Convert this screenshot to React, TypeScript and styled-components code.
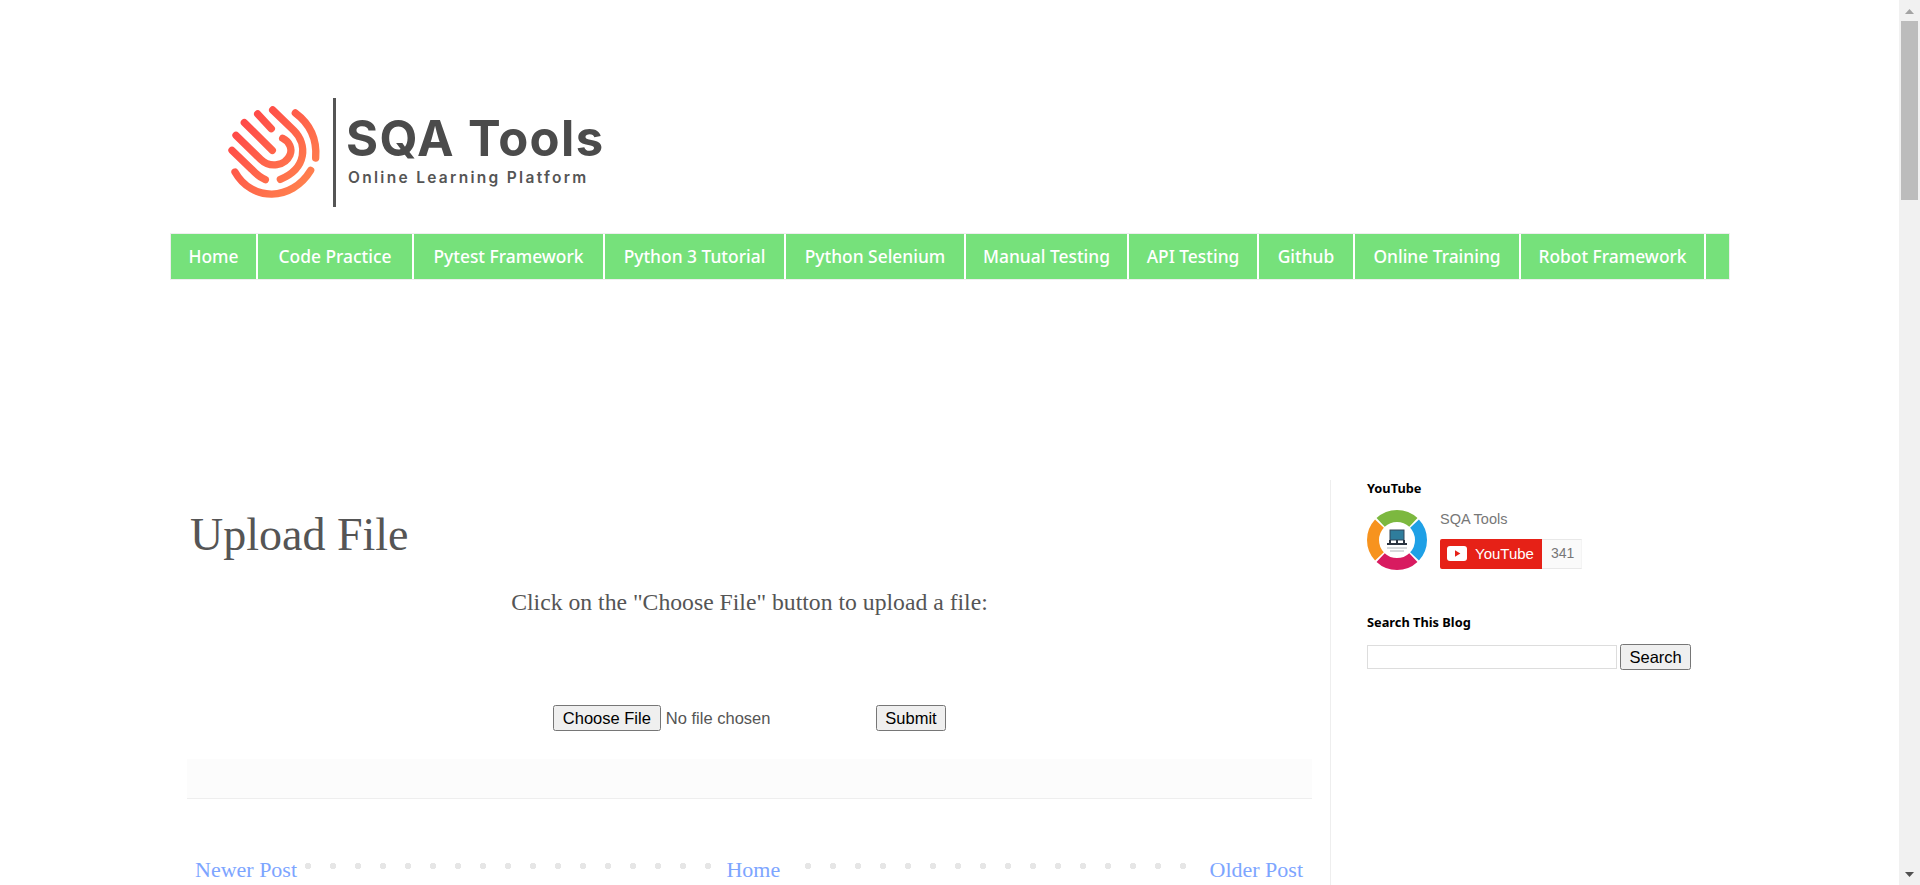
import React from 'react'
import styled, { createGlobalStyle } from 'styled-components'

const GlobalStyle = createGlobalStyle`
  html, body {
    margin: 0;
    padding: 0;
    background: #fff;
    overflow: hidden;
  }
`

const serif = `"Liberation Serif", "Times New Roman", serif`
const arial = `"Liberation Sans", Arial, sans-serif`
const trebuchet = `"Noto Sans", "Open Sans", sans-serif`

const Page = styled.div`
  display: flex;
  width: 1920px;
  height: 885px;
  overflow: hidden;
`

const Content = styled.div`
  flex: 1;
  padding-left: 171px;
  min-width: 0;
`

const Header = styled.header`
  display: flex;
  align-items: flex-start;
  height: 109px;
  padding-top: 98px;
  padding-left: 49px;
`

const LogoMark = styled.svg`
  width: 120px;
  height: 110px;
  flex: none;
  margin-top: 2px;
`

const LogoBar = styled.div`
  width: 3px;
  height: 109px;
  margin: 0 12px 0 -7px;
  background: #555;
`

const LogoText = styled.div`
  display: flex;
  flex-direction: column;
  padding-top: 14px;
  color: #4b4b4b;
  font-family: Inter, ${arial};
`

const LogoName = styled.div`
  font-size: 49px;
  font-weight: 700;
  line-height: 54px;
  letter-spacing: 1.4px;
  margin-left: -2px;
`

const LogoTag = styled.div`
  font-size: 15.5px;
  font-weight: 600;
  line-height: 20px;
  letter-spacing: 2.3px;
  margin-top: 2px;
  color: #555;
`

const Nav = styled.nav`
  display: flex;
  width: 1558px;
  height: 45px;
  margin-top: 27px;
  background: #76e17b;
  box-shadow: 0 0 0 1px #eee;
`

const Tab = styled.a<{ $w: number }>`
  width: ${(p) => p.$w}px;
  box-sizing: border-box;
  border-right: 2px solid #fff;
  color: #fff;
  font-family: ${trebuchet};
  font-size: 17.4px;
  font-weight: 500;
  line-height: 44px;
  text-align: center;
  text-decoration: none;
`

const Columns = styled.div`
  display: grid;
  grid-template-columns: 1159px 1fr;
  margin-top: 201px;
`

const Main = styled.main`
  padding: 0 18px 0 16px;
`

const Title = styled.h1`
  margin: 27px 0 0 3px;
  color: #555;
  font-family: ${serif};
  font-size: 46px;
  font-weight: 400;
  line-height: 56px;
`

const Lead = styled.p`
  margin: 25px 0 0;
  color: #555;
  font-family: ${serif};
  font-size: 23.7px;
  line-height: 28px;
  text-align: center;
`

const UploadForm = styled.form`
  display: flex;
  justify-content: center;
  margin-top: 89px;
  color: #555;
  font-family: ${arial};
  font-size: 16px;
`

const FileInput = styled.input`
  width: 323px;
  height: 26px;
  font-family: ${arial};
  font-size: 16.5px;
  color: #555;

  &::file-selector-button {
    height: 26px;
    padding: 0 8px;
    margin-right: 5px;
    color: #000;
    font-family: ${arial};
    font-size: 16.5px;
  }
`

const PlainButton = styled.button`
  height: 26px;
  padding: 0 7.5px;
  font-family: ${arial};
  font-size: 16.5px;
  color: #000;
`

const Band = styled.div`
  height: 39px;
  margin-top: 28px;
  background: #fcfcfc;
  border-bottom: 1px solid #eee;
`

const Pager = styled.div`
  display: flex;
  justify-content: space-between;
  margin-top: 58px;
  background-image: radial-gradient(circle at 3px 3px, #e6e6e6 3px, transparent 3.5px);
  background-position: 118px 6px;
  background-size: 25px 6px;
  background-repeat: repeat-x;
`

const PagerLink = styled.a`
  padding: 0 8px;
  margin: 0 -8px;
  background: #fff;
  color: #7da5ff;
  font-family: ${serif};
  font-size: 22px;
  line-height: 26px;
  text-decoration: none;

  &:first-child {
    padding-left: 8px;
    margin-left: 0;
  }

  &:last-child {
    padding-right: 9px;
    margin-right: 0;
  }
`

const Sidebar = styled.aside`
  height: 405px;
  padding-left: 36px;
  border-left: 1px solid #eee;
`

const WidgetTitle = styled.h2<{ $gap?: number }>`
  margin: ${(p) => p.$gap ?? 0}px 0 0;
  color: #000;
  font-family: ${trebuchet};
  font-size: 12.8px;
  font-weight: 700;
  line-height: 16px;
`

const Channel = styled.div`
  display: flex;
  gap: 13px;
  margin-top: 14px;
`

const Avatar = styled.svg`
  width: 60px;
  height: 60px;
  flex: none;
`

const ChannelInfo = styled.div`
  display: flex;
  flex-direction: column;
  gap: 10px;
`

const ChannelName = styled.div`
  color: #777;
  font-family: ${arial};
  font-size: 14.5px;
  line-height: 19px;
`

const SubscribeRow = styled.div`
  display: flex;
  height: 30px;
`

const SubscribeButton = styled.div`
  display: flex;
  align-items: center;
  gap: 8px;
  width: 102px;
  box-sizing: border-box;
  padding: 0 0 2px 7px;
  border-radius: 2px 0 0 2px;
  background: #e62117;
  color: #fff;
  font-family: ${arial};
  font-size: 15px;
`

const SubscribeCount = styled.div`
  width: 40px;
  box-sizing: border-box;
  padding-left: 9px;
  border: 1px solid #e8e8e8;
  border-left: 0;
  border-right-color: #f4f4f4;
  background: #fafafa;
  color: #777;
  font-family: ${arial};
  font-size: 14px;
  line-height: 26px;
`

const SearchRow = styled.div`
  display: flex;
  align-items: center;
  gap: 3px;
  margin-top: 14px;
`

const SearchInput = styled.input`
  width: 250px;
  height: 24px;
  box-sizing: border-box;
  border: 1px solid #ddd;
  outline: none;
`

const Rail = styled.div`
  display: flex;
  flex-direction: column;
  align-items: center;
  justify-content: space-between;
  width: 21px;
  height: 885px;
  background: #f1f1f1;
`

const RailTop = styled.div`
  display: flex;
  flex-direction: column;
  align-items: center;
`

const RailArrow = styled.svg`
  display: block;
  width: 21px;
  height: 21px;
`

const RailThumb = styled.div`
  width: 17px;
  height: 179px;
  background: #bcbcbc;
`

const tabs = [
  { label: 'Home', w: 87 },
  { label: 'Code Practice', w: 156 },
  { label: 'Pytest Framework', w: 191 },
  { label: 'Python 3 Tutorial', w: 181 },
  { label: 'Python Selenium', w: 180 },
  { label: 'Manual Testing', w: 163 },
  { label: 'API Testing', w: 130 },
  { label: 'Github', w: 96 },
  { label: 'Online Training', w: 166 },
  { label: 'Robot Framework', w: 185 },
]

// arc of the channel picture ring, angles in degrees from 12 o'clock
const arc = (from: number, to: number, r = 24, c = 30) => {
  const pt = (a: number) => {
    const t = (a * Math.PI) / 180
    return `${(c + r * Math.sin(t)).toFixed(2)} ${(c - r * Math.cos(t)).toFixed(2)}`
  }
  return `M${pt(from)} A${r} ${r} 0 0 1 ${pt(to)}`
}

const ring = [
  { from: -43, to: 43, color: '#7cb83f' },
  { from: 47, to: 133, color: '#1fa0e6' },
  { from: 137, to: 223, color: '#d81b60' },
  { from: 227, to: 313, color: '#f7931e' },
]

const App = () => {
  return (
    <>
      <GlobalStyle />
      <Page>
        <Content>
          <Header>
            <LogoMark viewBox="0 0 360 330" fill="none" strokeWidth="22" strokeLinecap="round">
              <defs>
                <linearGradient id="logoGrad" x1="60" y1="60" x2="300" y2="280" gradientUnits="userSpaceOnUse">
                  <stop offset="0" stopColor="#ff4747" />
                  <stop offset="1" stopColor="#ff8a4f" />
                </linearGradient>
              </defs>
              <g stroke="url(#logoGrad)">
                <path d="M73 68 L157 151" />
                <path d="M48 106 L122 178 C150 205 195 198 210 165 C218 145 208 125 188 115" />
                <path d="M113 42 L154 86" />
                <path d="M158 30 L222 92 C262 132 262 205 181 238" />
                <path d="M36 151 L95 208 C108 222 120 232 136 239" />
                <path d="M226 39 C265 68 292 110 287 174" />
                <path d="M45 216 C95 305 215 305 272 211" />
              </g>
            </LogoMark>
            <LogoBar />
            <LogoText>
              <LogoName>SQA Tools</LogoName>
              <LogoTag>Online Learning Platform</LogoTag>
            </LogoText>
          </Header>

          <Nav>
            {tabs.map((t) => (
              <Tab key={t.label} href="#" $w={t.w}>{t.label}</Tab>
            ))}
          </Nav>

          <Columns>
            <Main>
              <Title>Upload File</Title>
              <Lead>Click on the "Choose File" button to upload a file:</Lead>
              <UploadForm onSubmit={(e) => e.preventDefault()}>
                <FileInput type="file" />
                <PlainButton type="submit">Submit</PlainButton>
              </UploadForm>
              <Band />
              <Pager>
                <PagerLink href="#">Newer Post</PagerLink>
                <PagerLink href="#">Home</PagerLink>
                <PagerLink href="#">Older Post</PagerLink>
              </Pager>
            </Main>

            <Sidebar>
              <WidgetTitle>YouTube</WidgetTitle>
              <Channel>
                <Avatar viewBox="0 0 60 60" fill="none">
                  {ring.map((s) => (
                    <path key={s.color} d={arc(s.from, s.to)} stroke={s.color} strokeWidth="12" />
                  ))}
                  <rect x="23" y="20" width="14" height="10" fill="#2f7d9c" stroke="#33475b" strokeWidth="1" />
                  <path d="M20 34h20M23 30v5M30 30v5M37 30v5" stroke="#2b3440" strokeWidth="2" />
                  <path d="M20 38h20M23 41h14" stroke="#aeb4b8" strokeWidth="1" />
                </Avatar>
                <ChannelInfo>
                  <ChannelName>SQA Tools</ChannelName>
                  <SubscribeRow>
                    <SubscribeButton>
                      <svg width="20" height="15" viewBox="0 0 20 15">
                        <rect width="20" height="15" rx="3" fill="#fff" />
                        <path d="M8 4.2v6.6l5.4-3.3z" fill="#e62117" />
                      </svg>
                      YouTube
                    </SubscribeButton>
                    <SubscribeCount>341</SubscribeCount>
                  </SubscribeRow>
                </ChannelInfo>
              </Channel>
              <WidgetTitle $gap={44}>Search This Blog</WidgetTitle>
              <SearchRow>
                <SearchInput type="text" />
                <PlainButton type="button">Search</PlainButton>
              </SearchRow>
            </Sidebar>
          </Columns>
        </Content>

        <Rail>
          <RailTop>
            <RailArrow viewBox="0 0 21 21">
              <path d="M6 14 L10.5 9 L15 14z" fill="#a3a3a3" />
            </RailArrow>
            <RailThumb />
          </RailTop>
          <RailArrow viewBox="0 0 21 21">
            <path d="M6 8 L15 8 L10.5 13z" fill="#505050" />
          </RailArrow>
        </Rail>
      </Page>
    </>
  )
}

export default App
